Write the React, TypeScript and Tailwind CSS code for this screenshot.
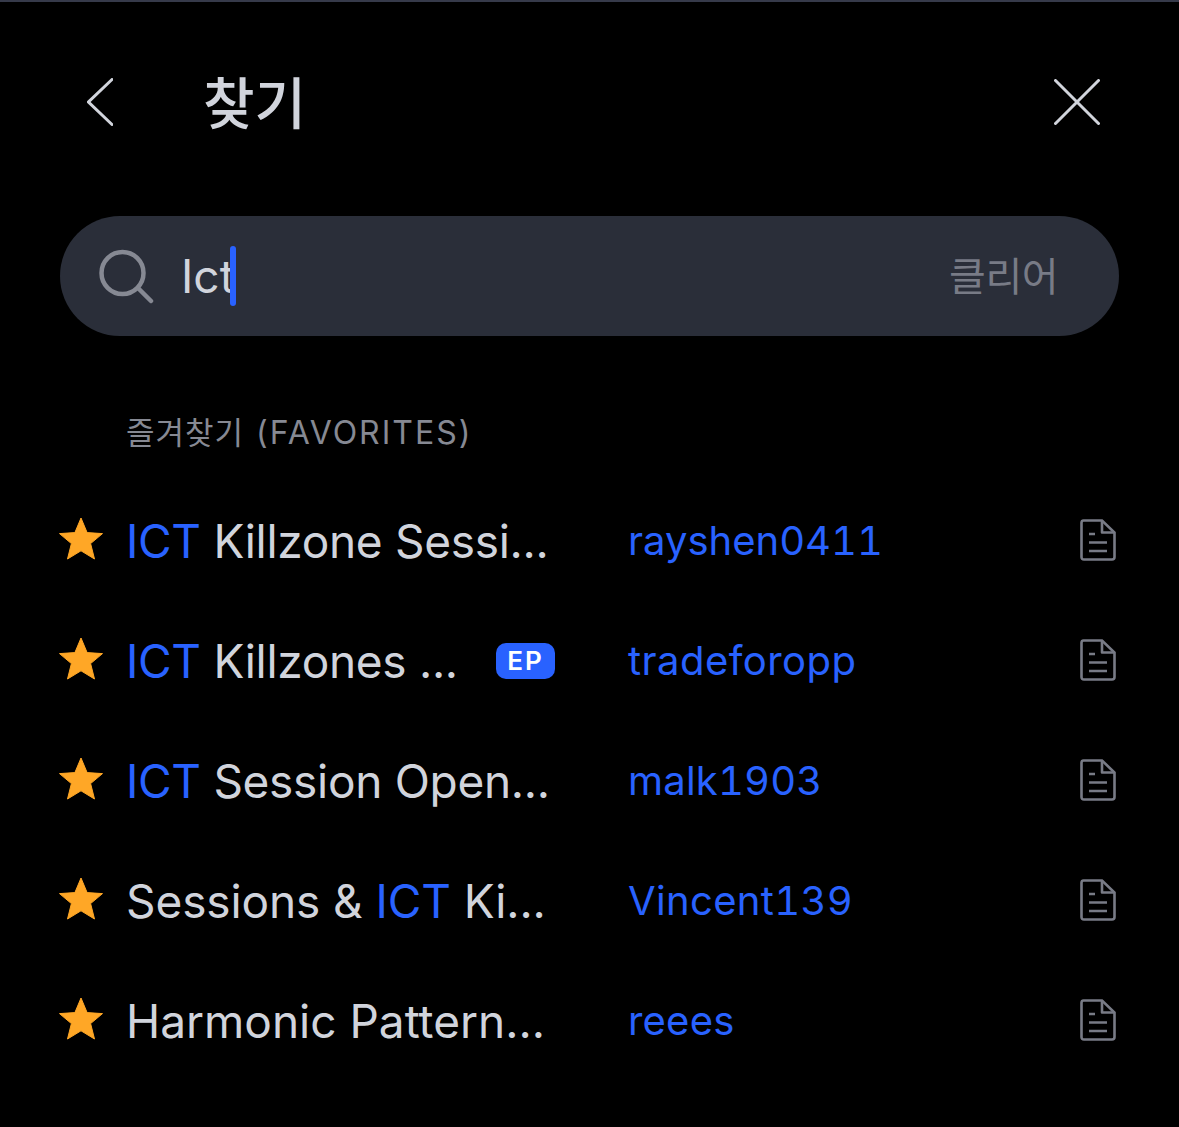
import React from "react";

function Star() {
  return (
    <svg width="46" height="44" viewBox="0 0 46 44" className="shrink-0 -mt-[5px]">
      <path d="M23 1 L29.1 15.6 L44.5 16.6 L32.6 26.6 L36.5 42 L23 33.8 L9.5 42 L13.4 26.6 L1.5 16.6 L16.9 15.6 Z" fill="#FFA726" stroke="#FFA726" strokeWidth="1" strokeLinejoin="round" />
    </svg>
  );
}

function Doc() {
  return (
    <svg width="36" height="42" viewBox="0 0 36 42" fill="none" stroke="#787B86" strokeWidth="2.6" className="shrink-0 -mt-[2px] block">
      <path d="M3.5 1.5 H22 L34.5 13.5 V38 Q34.5 40.5 32 40.5 H4 Q1.5 40.5 1.5 38 V4 Q1.5 1.5 3.5 1.5 Z" />
      <path d="M22 1.5 V13.5 H34.5" strokeLinejoin="round" />
      <path d="M9 15 H15 M9 23.5 H27 M9 32 H27" />
    </svg>
  );
}

type Part = { t: string; hi?: boolean };
const rows: { parts: Part[]; author: string; ep?: boolean; track: string; authorTrack: string }[] = [
  { parts: [{ t: "ICT", hi: true }, { t: " Killzone Sessi..." }], author: "rayshen0411", track: "tracking-[-0.3px]", authorTrack: "tracking-[0px]" },
  { parts: [{ t: "ICT", hi: true }, { t: " Killzones ..." }], author: "tradeforopp", ep: true, track: "tracking-[-0.3px]", authorTrack: "tracking-[0.45px]" },
  { parts: [{ t: "ICT", hi: true }, { t: " Session Open..." }], author: "malk1903", track: "tracking-[-0.3px]", authorTrack: "tracking-[0.2px]" },
  { parts: [{ t: "Sessions & " }, { t: "ICT", hi: true }, { t: " Ki..." }], author: "Vincent139", track: "tracking-[-0.1px]", authorTrack: "tracking-[0.35px]" },
  { parts: [{ t: "Harmonic Pattern..." }], author: "reees", track: "tracking-[0px]", authorTrack: "tracking-[0.2px]" },
];

export default function App() {
  return (
    <div className="w-[1179px] h-[1127px] bg-black overflow-hidden flex flex-col font-['Inter','Noto_Sans_CJK_KR',sans-serif] border-t-2 border-[#363a4a]">
      <header className="h-[198px] pl-[87px] pr-[79px] pt-[2px] flex items-center shrink-0">
        <div className="flex items-center w-full">
          <svg width="26" height="48" viewBox="0 0 26 48" fill="none" stroke="#D1D4DC" strokeWidth="3" strokeLinecap="round" className="shrink-0">
            <path d="M25 1.5 L1.5 24 L25 46.5" />
          </svg>
          <h1 className="ml-[90px] text-[56px] leading-[60px] font-medium text-[#D1D4DC] font-['Noto_Sans_CJK_KR',sans-serif] -mt-[5px]">찾기</h1>
          <svg width="46" height="46" viewBox="0 0 46 46" fill="none" stroke="#D1D4DC" strokeWidth="3" strokeLinecap="round" className="ml-auto shrink-0">
            <path d="M1.5 1.5 L44.5 44.5 M44.5 1.5 L1.5 44.5" />
          </svg>
        </div>
      </header>

      <div className="mx-[60px] h-[120px] shrink-0 rounded-full bg-[#2A2E39] flex items-center pl-[38px] pr-[61px] mt-[16px]">
        <svg width="56" height="56" viewBox="0 0 56 56" fill="none" stroke="#868993" strokeWidth="4.5" strokeLinecap="round" className="shrink-0">
          <circle cx="24.5" cy="25" r="21" />
          <path d="M40 40 L53 53" />
        </svg>
        <div className="ml-[27px] flex items-center relative">
          <span className="text-[46px] leading-[60px] text-[#D1D4DC] font-normal">Ict</span>
          <span className="absolute left-[49px] top-[0px] w-[6px] h-[60px] rounded-full bg-[#2962FF]" />
        </div>
        <span className="ml-auto -mt-[5px] text-[40px] leading-[50px] text-[#787B86] font-['Noto_Sans_CJK_KR',sans-serif] font-normal tracking-[-0.5px]">클리어</span>
      </div>

      <div className="pl-[126px] mt-[77px] h-[40px] shrink-0 flex items-center text-[32px] leading-[40px] text-[#868993] font-normal">
        <span className="text-[31px] tracking-[1px]">즐겨찾기</span>
        <span className="ml-[12px] tracking-[2px]">(FAVORITES)</span>
      </div>

      <ul className="mt-[28px] flex flex-col pl-[58px] pr-[63px]">
        {rows.map((r) => (
          <li key={r.author} className="h-[120px] flex items-center">
            <Star />
            <div className={"ml-[22px] w-[380px] shrink-0 flex-none whitespace-nowrap text-[46px] leading-[60px] text-[#D1D4DC] font-normal " + r.track}>
              {r.parts.map((p, i) => (
                <span key={i} className={p.hi ? "text-[#2962FF]" : ""}>{p.t}</span>
              ))}
            </div>
            <div className="w-[122px] flex-none flex items-center">
              {r.ep && (
                <span className="ml-[-10px] w-[59px] h-[36px] rounded-[10px] bg-[#2962FF] text-white text-[26px] leading-[36px] font-semibold text-center tracking-[2px]">EP</span>
              )}
            </div>
            <span className={"-mt-[1px] text-[40px] leading-[50px] text-[#2962FF] font-normal tabular-nums " + r.authorTrack}>{r.author}</span>
            <span className="ml-auto"><Doc /></span>
          </li>
        ))}
      </ul>
    </div>
  );
}
